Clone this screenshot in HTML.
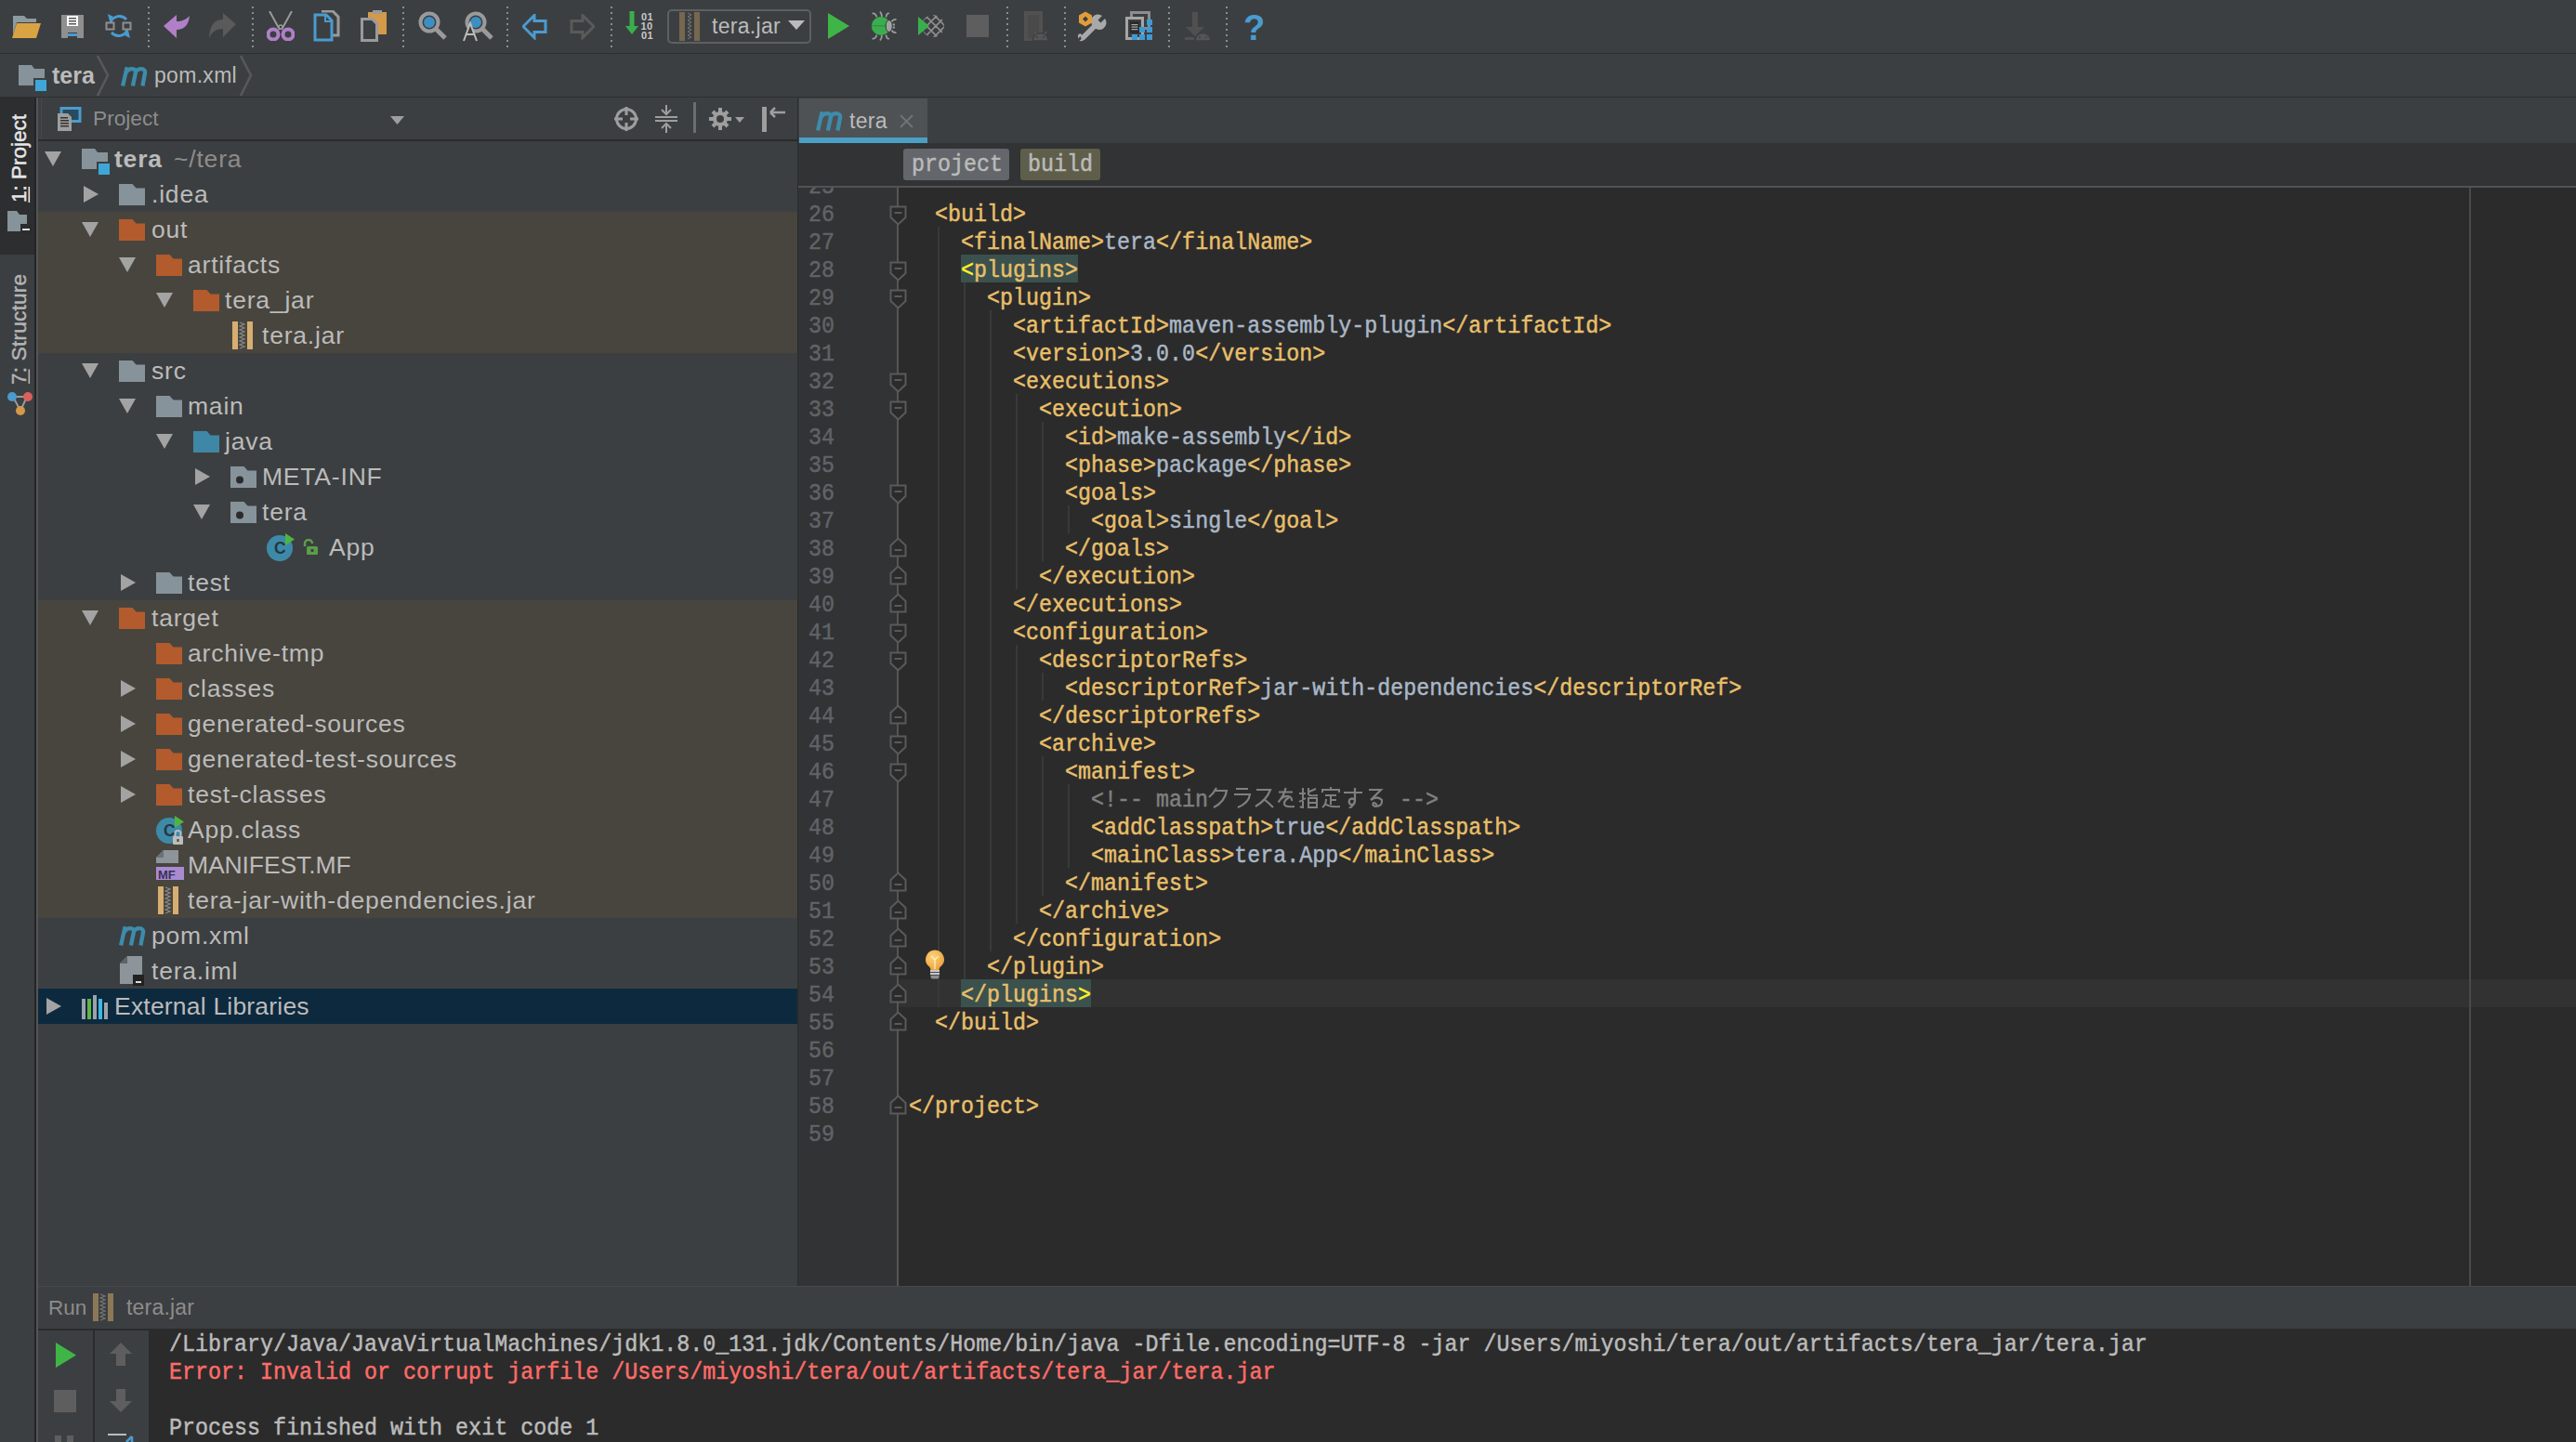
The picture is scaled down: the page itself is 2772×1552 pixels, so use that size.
<!DOCTYPE html><html><head><meta charset="utf-8"><style>
html,body{margin:0;padding:0;}
body{width:2772px;height:1552px;overflow:hidden;position:relative;background:#3c3f41;font-family:"Liberation Sans",sans-serif;}
div,svg{box-sizing:border-box;}
.cl{position:absolute;left:0;white-space:pre;font:26.3px/30px "Liberation Mono",monospace;transform:scaleX(0.8875);transform-origin:0 0;-webkit-text-stroke:0.5px currentColor;}
.t{color:#e8bf6a}.v{color:#a9b7c6}.c{color:#808080}
</style></head><body>
<div style="position:absolute;left:0px;top:0px;width:2772px;height:57px;background:#3c3f41;"></div>
<div style="position:absolute;left:0px;top:57px;width:2772px;height:1px;background:#2d2f30;"></div>
<svg style="position:absolute;left:159px;top:0px" width="2" height="58" viewBox="0 0 2 58"><rect x="0" y="7" width="2" height="2" fill="#8a8c8e"/><rect x="0" y="13" width="2" height="2" fill="#8a8c8e"/><rect x="0" y="19" width="2" height="2" fill="#8a8c8e"/><rect x="0" y="25" width="2" height="2" fill="#8a8c8e"/><rect x="0" y="31" width="2" height="2" fill="#8a8c8e"/><rect x="0" y="37" width="2" height="2" fill="#8a8c8e"/><rect x="0" y="43" width="2" height="2" fill="#8a8c8e"/><rect x="0" y="49" width="2" height="2" fill="#8a8c8e"/></svg>
<svg style="position:absolute;left:271px;top:0px" width="2" height="58" viewBox="0 0 2 58"><rect x="0" y="7" width="2" height="2" fill="#8a8c8e"/><rect x="0" y="13" width="2" height="2" fill="#8a8c8e"/><rect x="0" y="19" width="2" height="2" fill="#8a8c8e"/><rect x="0" y="25" width="2" height="2" fill="#8a8c8e"/><rect x="0" y="31" width="2" height="2" fill="#8a8c8e"/><rect x="0" y="37" width="2" height="2" fill="#8a8c8e"/><rect x="0" y="43" width="2" height="2" fill="#8a8c8e"/><rect x="0" y="49" width="2" height="2" fill="#8a8c8e"/></svg>
<svg style="position:absolute;left:433px;top:0px" width="2" height="58" viewBox="0 0 2 58"><rect x="0" y="7" width="2" height="2" fill="#8a8c8e"/><rect x="0" y="13" width="2" height="2" fill="#8a8c8e"/><rect x="0" y="19" width="2" height="2" fill="#8a8c8e"/><rect x="0" y="25" width="2" height="2" fill="#8a8c8e"/><rect x="0" y="31" width="2" height="2" fill="#8a8c8e"/><rect x="0" y="37" width="2" height="2" fill="#8a8c8e"/><rect x="0" y="43" width="2" height="2" fill="#8a8c8e"/><rect x="0" y="49" width="2" height="2" fill="#8a8c8e"/></svg>
<svg style="position:absolute;left:545px;top:0px" width="2" height="58" viewBox="0 0 2 58"><rect x="0" y="7" width="2" height="2" fill="#8a8c8e"/><rect x="0" y="13" width="2" height="2" fill="#8a8c8e"/><rect x="0" y="19" width="2" height="2" fill="#8a8c8e"/><rect x="0" y="25" width="2" height="2" fill="#8a8c8e"/><rect x="0" y="31" width="2" height="2" fill="#8a8c8e"/><rect x="0" y="37" width="2" height="2" fill="#8a8c8e"/><rect x="0" y="43" width="2" height="2" fill="#8a8c8e"/><rect x="0" y="49" width="2" height="2" fill="#8a8c8e"/></svg>
<svg style="position:absolute;left:657px;top:0px" width="2" height="58" viewBox="0 0 2 58"><rect x="0" y="7" width="2" height="2" fill="#8a8c8e"/><rect x="0" y="13" width="2" height="2" fill="#8a8c8e"/><rect x="0" y="19" width="2" height="2" fill="#8a8c8e"/><rect x="0" y="25" width="2" height="2" fill="#8a8c8e"/><rect x="0" y="31" width="2" height="2" fill="#8a8c8e"/><rect x="0" y="37" width="2" height="2" fill="#8a8c8e"/><rect x="0" y="43" width="2" height="2" fill="#8a8c8e"/><rect x="0" y="49" width="2" height="2" fill="#8a8c8e"/></svg>
<svg style="position:absolute;left:1083px;top:0px" width="2" height="58" viewBox="0 0 2 58"><rect x="0" y="7" width="2" height="2" fill="#8a8c8e"/><rect x="0" y="13" width="2" height="2" fill="#8a8c8e"/><rect x="0" y="19" width="2" height="2" fill="#8a8c8e"/><rect x="0" y="25" width="2" height="2" fill="#8a8c8e"/><rect x="0" y="31" width="2" height="2" fill="#8a8c8e"/><rect x="0" y="37" width="2" height="2" fill="#8a8c8e"/><rect x="0" y="43" width="2" height="2" fill="#8a8c8e"/><rect x="0" y="49" width="2" height="2" fill="#8a8c8e"/></svg>
<svg style="position:absolute;left:1145px;top:0px" width="2" height="58" viewBox="0 0 2 58"><rect x="0" y="7" width="2" height="2" fill="#8a8c8e"/><rect x="0" y="13" width="2" height="2" fill="#8a8c8e"/><rect x="0" y="19" width="2" height="2" fill="#8a8c8e"/><rect x="0" y="25" width="2" height="2" fill="#8a8c8e"/><rect x="0" y="31" width="2" height="2" fill="#8a8c8e"/><rect x="0" y="37" width="2" height="2" fill="#8a8c8e"/><rect x="0" y="43" width="2" height="2" fill="#8a8c8e"/><rect x="0" y="49" width="2" height="2" fill="#8a8c8e"/></svg>
<svg style="position:absolute;left:1257px;top:0px" width="2" height="58" viewBox="0 0 2 58"><rect x="0" y="7" width="2" height="2" fill="#8a8c8e"/><rect x="0" y="13" width="2" height="2" fill="#8a8c8e"/><rect x="0" y="19" width="2" height="2" fill="#8a8c8e"/><rect x="0" y="25" width="2" height="2" fill="#8a8c8e"/><rect x="0" y="31" width="2" height="2" fill="#8a8c8e"/><rect x="0" y="37" width="2" height="2" fill="#8a8c8e"/><rect x="0" y="43" width="2" height="2" fill="#8a8c8e"/><rect x="0" y="49" width="2" height="2" fill="#8a8c8e"/></svg>
<svg style="position:absolute;left:1319px;top:0px" width="2" height="58" viewBox="0 0 2 58"><rect x="0" y="7" width="2" height="2" fill="#8a8c8e"/><rect x="0" y="13" width="2" height="2" fill="#8a8c8e"/><rect x="0" y="19" width="2" height="2" fill="#8a8c8e"/><rect x="0" y="25" width="2" height="2" fill="#8a8c8e"/><rect x="0" y="31" width="2" height="2" fill="#8a8c8e"/><rect x="0" y="37" width="2" height="2" fill="#8a8c8e"/><rect x="0" y="43" width="2" height="2" fill="#8a8c8e"/><rect x="0" y="49" width="2" height="2" fill="#8a8c8e"/></svg>
<svg style="position:absolute;left:13px;top:16px" width="32" height="26" viewBox="0 0 32 26"><path d="M1 1h12l3 3h10v4H5L1 22z" fill="#8d9aa1"/><path d="M5 9h26l-5 16H0z" fill="#d9a343"/></svg>
<svg style="position:absolute;left:66px;top:16px" width="24" height="25" viewBox="0 0 24 25"><path d="M0 0h24v25H0z" fill="#8f8f8f"/><rect x="6" y="1" width="12" height="11" fill="#fff"/><rect x="8" y="3" width="8" height="1.5" fill="#555"/><rect x="8" y="6" width="8" height="1.5" fill="#555"/><rect x="8" y="9" width="8" height="1.5" fill="#555"/><rect x="7" y="19" width="10" height="6" fill="#3c3f41"/><rect x="7" y="20" width="10" height="3" fill="#4a9bd0"/></svg>
<svg style="position:absolute;left:113px;top:13px" width="30" height="30" viewBox="0 0 30 30"><path d="M6 11 A10 10 0 0 1 23 8" stroke="#4a9bd0" stroke-width="3" fill="none"/><path d="M24 19 A10 10 0 0 1 7 22" stroke="#4a9bd0" stroke-width="3" fill="none"/><path d="M3 2l6 3-4 5z" fill="#4a9bd0"/><path d="M27 28l-6-3 4-5z" fill="#4a9bd0"/><rect x="1.5" y="11.5" width="8" height="7" stroke="#8f8f8f" stroke-width="2" fill="none"/><rect x="19.5" y="11.5" width="8" height="7" stroke="#8f8f8f" stroke-width="2" fill="none"/></svg>
<svg style="position:absolute;left:176px;top:15px" width="29" height="28" viewBox="0 0 29 28"><path d="M0 13L14 1v7c6 0 10-2 14-6-1 10-6 15-14 15v9z" fill="#b17fc8"/></svg>
<svg style="position:absolute;left:225px;top:14px" width="29" height="28" viewBox="0 0 29 28"><path d="M29 12L15 0v7C7 7 1 11 0 27c3-7 8-10 15-10v9z" fill="#5a5a5a"/></svg>
<svg style="position:absolute;left:287px;top:12px" width="30" height="32" viewBox="0 0 30 32"><path d="M3 0l11 20M27 0L16 20" stroke="#9a9a9a" stroke-width="2" fill="none"/><circle cx="15" cy="17" r="2" fill="#3c3f41" stroke="#9a9a9a" stroke-width="1.5"/><circle cx="7" cy="25" r="5.5" fill="none" stroke="#b17fc8" stroke-width="4"/><circle cx="23" cy="25" r="5.5" fill="none" stroke="#b17fc8" stroke-width="4"/></svg>
<svg style="position:absolute;left:337px;top:11px" width="30" height="34" viewBox="0 0 30 34"><path d="M9 1h12l6 6v20H19" stroke="#9a9a9a" stroke-width="3" fill="none"/><path d="M2 5h12l6 6v21H2z" stroke="#4a9bd0" stroke-width="3" fill="#3c3f41"/><path d="M13 5v7h7" stroke="#4a9bd0" stroke-width="2" fill="none"/></svg>
<svg style="position:absolute;left:388px;top:11px" width="30" height="34" viewBox="0 0 30 34"><rect x="8" y="2" width="20" height="24" fill="#d39a4a"/><rect x="13" y="0" width="10" height="4" fill="#9a9a9a"/><path d="M1.5 9.5h11l5 5v18h-16z" stroke="#9a9a9a" stroke-width="3" fill="#3c3f41"/></svg>
<svg style="position:absolute;left:450px;top:12px" width="31" height="31" viewBox="0 0 31 31"><circle cx="12" cy="12" r="9.5" stroke="#9a9a9a" stroke-width="4" fill="none"/><circle cx="12" cy="12" r="6" fill="#3d8ec2"/><path d="M19 19l10 10" stroke="#9a9a9a" stroke-width="5"/></svg>
<svg style="position:absolute;left:498px;top:12px" width="33" height="33" viewBox="0 0 33 33"><circle cx="14" cy="12" r="9.5" stroke="#9a9a9a" stroke-width="4" fill="none"/><circle cx="14" cy="12" r="6" fill="#3d8ec2"/><path d="M21 19l10 10" stroke="#9a9a9a" stroke-width="5"/><path d="M1 32L8 13l7 19M4 25h8" stroke="#bbbbbb" stroke-width="2" fill="#3c3f41"/></svg>
<svg style="position:absolute;left:562px;top:15px" width="27" height="28" viewBox="0 0 27 28"><path d="M1 13.5L13 1.5v6h12v12H13v6z" stroke="#4a9bd0" stroke-width="3" fill="none"/></svg>
<svg style="position:absolute;left:613px;top:15px" width="27" height="28" viewBox="0 0 27 28"><path d="M26 13.5L14 1.5v6H2v12h12v6z" stroke="#5a5a5a" stroke-width="3" fill="none"/></svg>
<svg style="position:absolute;left:673px;top:12px" width="34" height="34" viewBox="0 0 34 34"><path d="M7 0v19" stroke="#3aae4e" stroke-width="5"/><path d="M0 16h14l-7 9z" fill="#3aae4e"/><text x="17" y="9.5" font-family="Liberation Sans" font-size="11" fill="#c8c8c8" font-weight="bold" letter-spacing="0.5">01</text><text x="16.5" y="19.5" font-family="Liberation Sans" font-size="11" fill="#c8c8c8" font-weight="bold" letter-spacing="0.5">10</text><text x="17" y="29.5" font-family="Liberation Sans" font-size="11" fill="#c8c8c8" font-weight="bold" letter-spacing="0.5">01</text></svg>
<div style="position:absolute;left:718px;top:10px;width:155px;height:37px;border:2px solid #5e6060;border-radius:5px;background:#3c3f41"></div>
<svg style="position:absolute;left:731px;top:12px" width="23" height="33" viewBox="0 0 23 33"><rect x="0" y="1" width="6" height="31" fill="#76674f"/><rect x="16" y="1" width="6" height="31" fill="#76674f"/><path d="M9 2l4 2-4 2 4 2-4 2 4 2-4 2 4 2-4 2 4 2-4 2 4 2-4 2 4 2-4 2" stroke="#777" stroke-width="1" fill="none"/></svg>
<div style="position:absolute;left:766px;top:17.03px;font:normal 23px/23px 'Liberation Sans', sans-serif;color:#bbbbbb;letter-spacing:0.3px;white-space:pre;">tera.jar</div>
<svg style="position:absolute;left:848px;top:22px" width="18" height="11" viewBox="0 0 18 11"><path d="M0 0h18L9 10z" fill="#bbbbbb"/></svg>
<svg style="position:absolute;left:891px;top:14px" width="23" height="28" viewBox="0 0 23 28"><path d="M0 0l23 14L0 28z" fill="#3fb547"/></svg>
<svg style="position:absolute;left:937px;top:12px" width="33" height="32" viewBox="0 0 33 32"><g stroke="#9a9a9a" stroke-width="1.8" fill="none"><path d="M1.5 2.5Q5 1.5 6.5 6.5M10 0.5Q12 3 12 6M20 2.5Q17 1.5 16.5 6.5M1.5 29.5Q5 30.5 6.5 25.5M10 31.5Q12 29 12 26M20 29.5Q17 30.5 16.5 25.5M22 12Q24 8.5 27.5 9M22 20Q24 23.5 27.5 23M23 14.5h3M23 17.5h3"/></g><ellipse cx="11" cy="16" rx="10.2" ry="10" fill="#3aae4e"/><path d="M1 15h16v1.5H1z" fill="#2f9643"/><ellipse cx="19.7" cy="16" rx="3.6" ry="6.4" fill="#a3a3a3" stroke="#2f3a33" stroke-width="1"/></svg>
<svg style="position:absolute;left:987px;top:13px" width="30" height="30" viewBox="0 0 30 30"><defs><clipPath id="cvc"><circle cx="17" cy="15" r="12"/></clipPath></defs><g clip-path="url(#cvc)" stroke="#8f8f8f" stroke-width="1.6"><path d="M-10 5L20 35M-5 0L25 30M0 -5L30 25M5 -10L35 20M10 -15L40 15M-10 25L20 -5M-5 30L25 0M0 35L30 5M5 40L35 10M10 45L40 15"/></g><path d="M1 5l12 10L1 25z" fill="#3aae4e"/></svg>
<div style="position:absolute;left:1040px;top:16px;width:24px;height:24px;background:#5e5e5e;"></div>
<svg style="position:absolute;left:1101px;top:12px" width="28" height="32" viewBox="0 0 28 32"><rect x="3" y="2" width="16" height="29" stroke="#515151" stroke-width="4" fill="#4a4a4a"/><path d="M10 32a8.5 8.5 0 0 1 17 0z" fill="#555" stroke="#3c3f41" stroke-width="1.5"/><path d="M12 22l2 3M25 22l-2 3" stroke="#555" stroke-width="1.5"/><circle cx="15" cy="28" r="1" fill="#3c3f41"/><circle cx="22" cy="28" r="1" fill="#3c3f41"/></svg>
<svg style="position:absolute;left:1160px;top:12px" width="33" height="33" viewBox="0 0 33 33"><path d="M6 28L19 15" stroke="#a9a9a9" stroke-width="5.5" stroke-linecap="round"/><path d="M17 17a7.5 7.5 0 0 1 9-12l-4.5 4.5 3 3L29 8a7.5 7.5 0 0 1-12 9z" fill="#a9a9a9"/><path d="M7.5 29a5 5 0 0 1-6 3l3-3-2-2-3 3a5 5 0 0 1 3-6z" fill="#a9a9a9"/><path d="M8 0.5l7 4v8l-7 4-7-4v-8z" fill="#e19d3b"/><path d="M8 5.5l3 3-3 3-3-3z" fill="#3c3f41"/></svg>
<svg style="position:absolute;left:1211px;top:12px" width="30" height="32" viewBox="0 0 30 32"><rect x="6.5" y="1.5" width="19" height="17" stroke="#8d8d8d" stroke-width="3" fill="none"/><rect x="1.5" y="7.5" width="17" height="22" stroke="#a5a5a5" stroke-width="3" fill="#3c3f41"/><rect x="5" y="11" width="10" height="13" fill="#2b2b2b"/><g fill="#aaa"><rect x="6.5" y="14" width="7" height="1.2"/><rect x="6.5" y="16.5" width="7" height="1.2"/><rect x="6.5" y="19" width="7" height="1.2"/></g><g fill="#3d9ad6"><rect x="23" y="9" width="6" height="6"/><rect x="15" y="17" width="6" height="6"/><rect x="23" y="17" width="6" height="6"/><rect x="7" y="25" width="6" height="6"/><rect x="15" y="25" width="6" height="6"/><rect x="23" y="25" width="6" height="6"/></g></svg>
<svg style="position:absolute;left:1275px;top:12px" width="28" height="32" viewBox="0 0 28 32"><path d="M11 1v18" stroke="#505050" stroke-width="6"/><path d="M1 17h20L11 27z" fill="#505050"/><rect x="0" y="28" width="10" height="3" fill="#505050"/><path d="M11 32a8.5 8.5 0 0 1 17 0z" fill="#555" stroke="#3c3f41" stroke-width="1.5"/><circle cx="16" cy="28" r="1" fill="#3c3f41"/><circle cx="23" cy="28" r="1" fill="#3c3f41"/></svg>
<div style="position:absolute;left:1338px;top:10.83px;font:bold 38px/38px 'Liberation Sans', sans-serif;color:#4a9bd0;letter-spacing:0px;white-space:pre;">?</div>
<div style="position:absolute;left:0px;top:58px;width:2772px;height:46px;background:#3c3f41;"></div>
<div style="position:absolute;left:0px;top:104px;width:2772px;height:1px;background:#2d2f30;"></div>
<svg style="position:absolute;left:20px;top:70px" width="32" height="29" viewBox="0 0 32 29"><path d="M0 0h14l3 4h11v18H0z" fill="#87939a"/><rect x="16" y="14" width="15" height="14" fill="#3c3f41"/><rect x="18" y="16" width="12" height="12" fill="#3ea6d8"/></svg>
<div style="position:absolute;left:56px;top:68.54px;font:bold 25px/25px 'Liberation Sans', sans-serif;color:#bbbbbb;letter-spacing:0px;white-space:pre;">tera</div>
<svg style="position:absolute;left:103px;top:59px" width="16" height="45" viewBox="0 0 16 45"><path d="M2 1l11 21L2 44" stroke="#56585a" stroke-width="2.6" fill="none"/></svg>
<svg style="position:absolute;left:130px;top:72px" width="30" height="22" viewBox="0 0 30 22"><path d="M2.1 20.5 L6.7 0.2 M5.6 6.5 C7.4 3.2 9.6 2.2 12.2 2.2 C15.2 2.2 16.4 3.9 15.8 6.8 L12.9 20.5 M15.3 6.5 C17.1 3.2 19.3 2.2 21.9 2.2 C24.9 2.2 26.6 3.9 26 6.8 L23.4 20.5" stroke="#3d8cab" stroke-width="4.3" fill="none"/></svg>
<div style="position:absolute;left:166px;top:70.23px;font:normal 23px/23px 'Liberation Sans', sans-serif;color:#bbbbbb;letter-spacing:0.3px;white-space:pre;">pom.xml</div>
<svg style="position:absolute;left:257px;top:59px" width="16" height="45" viewBox="0 0 16 45"><path d="M2 1l11 21L2 44" stroke="#56585a" stroke-width="2.6" fill="none"/></svg>
<div style="position:absolute;left:0px;top:105px;width:39px;height:1447px;background:#3c3f41;"></div>
<div style="position:absolute;left:0px;top:105px;width:37px;height:169px;background:#2d2e30;"></div>
<div style="position:absolute;left:37px;top:105px;width:2px;height:1447px;background:#232425;"></div>
<div style="position:absolute;left:39px;top:105px;width:2px;height:1447px;background:#535557;"></div>
<svg style="position:absolute;left:0px;top:105px" width="39" height="168" viewBox="0 0 39 168"><text transform="translate(27.5,113) rotate(-90)" font-family="Liberation Sans" font-size="22.5" fill="#e6e6e6" stroke="#e6e6e6" stroke-width="0.45">1: Project</text><rect x="30.5" y="96" width="1.6" height="17" fill="#e6e6e6"/></svg>
<svg style="position:absolute;left:8px;top:227px" width="27" height="24" viewBox="0 0 27 24"><path d="M0 0h10l3 4h8v18H0z" fill="#87939a"/><rect x="14" y="14" width="13" height="10" fill="#2b2c2e"/><rect x="16" y="19" width="8" height="2" fill="#ddd"/></svg>
<svg style="position:absolute;left:0px;top:280px" width="39" height="140" viewBox="0 0 39 140"><text transform="translate(27.5,134) rotate(-90)" font-family="Liberation Sans" font-size="22.5" fill="#b4b4b4" stroke="#b4b4b4" stroke-width="0.45" letter-spacing="0.25">7: Structure</text><rect x="30.5" y="117.5" width="1.6" height="15.5" fill="#b4b4b4"/></svg>
<svg style="position:absolute;left:8px;top:421px" width="27" height="27" viewBox="0 0 27 27"><path d="M6 6L14 21M21 6L14 21M6 6h15" stroke="#999" stroke-width="2"/><circle cx="5" cy="6" r="5" fill="#4a9bd0"/><circle cx="22" cy="6" r="5" fill="#d9605c"/><circle cx="14" cy="21" r="5" fill="#d39a4a"/></svg>
<div style="position:absolute;left:41px;top:105px;width:817px;height:45px;background:#3c3f41;"></div>
<div style="position:absolute;left:44px;top:105px;width:1px;height:45px;background:#45484a;"></div>
<div style="position:absolute;left:41px;top:150px;width:817px;height:2px;background:#2a2b2c;"></div>
<svg style="position:absolute;left:62px;top:115px" width="30" height="26" viewBox="0 0 30 26"><rect x="4" y="1.5" width="20" height="14" stroke="#4a9bd0" stroke-width="3" fill="#2a4a5e"/><path d="M0 7h11l4 4v15H0z" fill="#9e9e9e"/><g fill="#333"><rect x="3" y="11" width="8" height="1.5"/><rect x="3" y="14" width="9" height="1.5"/><rect x="3" y="17" width="9" height="1.5"/><rect x="3" y="20" width="9" height="1.5"/></g></svg>
<div style="position:absolute;left:100px;top:116.48px;font:normal 22.7px/22.7px 'Liberation Sans', sans-serif;color:#8c8c8c;letter-spacing:0px;white-space:pre;">Project</div>
<svg style="position:absolute;left:420px;top:125px" width="15" height="9" viewBox="0 0 15 9"><path d="M0 0h15L7.5 9z" fill="#9e9e9e"/></svg>
<svg style="position:absolute;left:661px;top:115px" width="26" height="26" viewBox="0 0 26 26"><circle cx="13" cy="13" r="10.5" stroke="#9e9e9e" stroke-width="3" fill="none"/><path d="M13 0v9M13 17v9M0 13h9M17 13h9" stroke="#9e9e9e" stroke-width="3"/></svg>
<svg style="position:absolute;left:705px;top:113px" width="24" height="30" viewBox="0 0 24 30"><path d="M0 13h24M0 17h24" stroke="#9e9e9e" stroke-width="2"/><path d="M12 0v9M7 5l5 5 5-5M12 30v-9M7 25l5-5 5 5" stroke="#9e9e9e" stroke-width="2" fill="none"/></svg>
<div style="position:absolute;left:746px;top:110px;width:3px;height:33px;background:#6b6e70;"></div>
<svg style="position:absolute;left:763px;top:115px" width="40" height="26" viewBox="0 0 40 26"><circle cx="12" cy="13" r="8" fill="#9e9e9e"/><g stroke="#9e9e9e" stroke-width="4"><path d="M12 1v24M0 13h24M4 5l16 16M20 5L4 21"/></g><circle cx="12" cy="13" r="4" fill="#3c3f41"/><path d="M28 11h10l-5 6z" fill="#9e9e9e"/></svg>
<svg style="position:absolute;left:819px;top:114px" width="27" height="28" viewBox="0 0 27 28"><rect x="1" y="1" width="5" height="27" fill="#9e9e9e"/><path d="M10 7h16M10 7l5-5M10 7l5 5" stroke="#9e9e9e" stroke-width="2.5" fill="none"/></svg>
<div style="position:absolute;left:41px;top:228px;width:817px;height:38px;background:#48453e;"></div>
<div style="position:absolute;left:41px;top:266px;width:817px;height:38px;background:#48453e;"></div>
<div style="position:absolute;left:41px;top:304px;width:817px;height:38px;background:#48453e;"></div>
<div style="position:absolute;left:41px;top:342px;width:817px;height:38px;background:#48453e;"></div>
<div style="position:absolute;left:41px;top:646px;width:817px;height:38px;background:#48453e;"></div>
<div style="position:absolute;left:41px;top:684px;width:817px;height:38px;background:#48453e;"></div>
<div style="position:absolute;left:41px;top:722px;width:817px;height:38px;background:#48453e;"></div>
<div style="position:absolute;left:41px;top:760px;width:817px;height:38px;background:#48453e;"></div>
<div style="position:absolute;left:41px;top:798px;width:817px;height:38px;background:#48453e;"></div>
<div style="position:absolute;left:41px;top:836px;width:817px;height:38px;background:#48453e;"></div>
<div style="position:absolute;left:41px;top:874px;width:817px;height:38px;background:#48453e;"></div>
<div style="position:absolute;left:41px;top:912px;width:817px;height:38px;background:#48453e;"></div>
<div style="position:absolute;left:41px;top:950px;width:817px;height:38px;background:#48453e;"></div>
<div style="position:absolute;left:41px;top:1064px;width:817px;height:38px;background:#0d293e;"></div>
<svg style="position:absolute;left:48px;top:163px" width="18" height="16" viewBox="0 0 18 16"><path d="M0 0h18L9 16z" fill="#a3a3a3"/></svg>
<svg style="position:absolute;left:88px;top:160px" width="32" height="29" viewBox="0 0 32 29"><path d="M0 0h14l3 4h11v18H0z" fill="#87939a"/><rect x="16" y="14" width="15" height="14" fill="#3c3f41"/><rect x="18" y="16" width="12" height="12" fill="#3ea6d8"/></svg>
<div style="position:absolute;left:123px;top:158.07px;font:normal 26.5px/26.5px 'Liberation Sans', sans-serif;color:#bbbbbb;letter-spacing:0.8px;white-space:pre;"><b>tera</b></div>
<div style="position:absolute;left:187px;top:158.07px;font:normal 26.5px/26.5px 'Liberation Sans', sans-serif;color:#8c8c8c;letter-spacing:0.8px;white-space:pre;">~/tera</div>
<svg style="position:absolute;left:90px;top:200px" width="16" height="18" viewBox="0 0 16 18"><path d="M0 0v18L16 9z" fill="#a3a3a3"/></svg>
<svg style="position:absolute;left:128px;top:198px" width="28" height="23" viewBox="0 0 28 23"><path d="M0 0h14.5l4 4.5H28V23H0z" fill="#87939a"/></svg>
<div style="position:absolute;left:163px;top:196.07px;font:normal 26.5px/26.5px 'Liberation Sans', sans-serif;color:#bbbbbb;letter-spacing:0.8px;white-space:pre;">.idea</div>
<svg style="position:absolute;left:88px;top:239px" width="18" height="16" viewBox="0 0 18 16"><path d="M0 0h18L9 16z" fill="#a3a3a3"/></svg>
<svg style="position:absolute;left:128px;top:236px" width="28" height="23" viewBox="0 0 28 23"><path d="M0 0h14.5l4 4.5H28V23H0z" fill="#b35b2c"/></svg>
<div style="position:absolute;left:163px;top:234.07px;font:normal 26.5px/26.5px 'Liberation Sans', sans-serif;color:#bbbbbb;letter-spacing:0.8px;white-space:pre;">out</div>
<svg style="position:absolute;left:128px;top:277px" width="18" height="16" viewBox="0 0 18 16"><path d="M0 0h18L9 16z" fill="#a3a3a3"/></svg>
<svg style="position:absolute;left:168px;top:274px" width="28" height="23" viewBox="0 0 28 23"><path d="M0 0h14.5l4 4.5H28V23H0z" fill="#b35b2c"/></svg>
<div style="position:absolute;left:202px;top:272.07px;font:normal 26.5px/26.5px 'Liberation Sans', sans-serif;color:#bbbbbb;letter-spacing:0.8px;white-space:pre;">artifacts</div>
<svg style="position:absolute;left:168px;top:315px" width="18" height="16" viewBox="0 0 18 16"><path d="M0 0h18L9 16z" fill="#a3a3a3"/></svg>
<svg style="position:absolute;left:208px;top:312px" width="28" height="23" viewBox="0 0 28 23"><path d="M0 0h14.5l4 4.5H28V23H0z" fill="#b35b2c"/></svg>
<div style="position:absolute;left:242px;top:310.07px;font:normal 26.5px/26.5px 'Liberation Sans', sans-serif;color:#bbbbbb;letter-spacing:0.8px;white-space:pre;">tera_jar</div>
<svg style="position:absolute;left:250px;top:346px" width="23" height="30" viewBox="0 0 23 30"><rect x="0" y="0" width="6" height="30" fill="#d7ae72"/><rect x="16" y="0" width="6" height="30" fill="#d7ae72"/><path d="M8 1l5 2-5 2 5 2-5 2 5 2-5 2 5 2-5 2 5 2-5 2 5 2-5 2 5 2-5 2" stroke="#8a8a8a" stroke-width="1.2" fill="none"/></svg>
<div style="position:absolute;left:282px;top:348.07px;font:normal 26.5px/26.5px 'Liberation Sans', sans-serif;color:#bbbbbb;letter-spacing:0.8px;white-space:pre;">tera.jar</div>
<svg style="position:absolute;left:88px;top:391px" width="18" height="16" viewBox="0 0 18 16"><path d="M0 0h18L9 16z" fill="#a3a3a3"/></svg>
<svg style="position:absolute;left:128px;top:388px" width="28" height="23" viewBox="0 0 28 23"><path d="M0 0h14.5l4 4.5H28V23H0z" fill="#87939a"/></svg>
<div style="position:absolute;left:163px;top:386.07px;font:normal 26.5px/26.5px 'Liberation Sans', sans-serif;color:#bbbbbb;letter-spacing:0.8px;white-space:pre;">src</div>
<svg style="position:absolute;left:128px;top:429px" width="18" height="16" viewBox="0 0 18 16"><path d="M0 0h18L9 16z" fill="#a3a3a3"/></svg>
<svg style="position:absolute;left:168px;top:426px" width="28" height="23" viewBox="0 0 28 23"><path d="M0 0h14.5l4 4.5H28V23H0z" fill="#87939a"/></svg>
<div style="position:absolute;left:202px;top:424.07px;font:normal 26.5px/26.5px 'Liberation Sans', sans-serif;color:#bbbbbb;letter-spacing:0.8px;white-space:pre;">main</div>
<svg style="position:absolute;left:168px;top:467px" width="18" height="16" viewBox="0 0 18 16"><path d="M0 0h18L9 16z" fill="#a3a3a3"/></svg>
<svg style="position:absolute;left:208px;top:464px" width="28" height="23" viewBox="0 0 28 23"><path d="M0 0h14.5l4 4.5H28V23H0z" fill="#3f87a6"/></svg>
<div style="position:absolute;left:242px;top:462.07px;font:normal 26.5px/26.5px 'Liberation Sans', sans-serif;color:#bbbbbb;letter-spacing:0.8px;white-space:pre;">java</div>
<svg style="position:absolute;left:210px;top:504px" width="16" height="18" viewBox="0 0 16 18"><path d="M0 0v18L16 9z" fill="#a3a3a3"/></svg>
<svg style="position:absolute;left:248px;top:502px" width="28" height="23" viewBox="0 0 28 23"><path d="M0 0h14.5l4 4.5H28V23H0z" fill="#87939a"/><circle cx="10" cy="14.5" r="4" fill="#2b2b2b"/></svg>
<div style="position:absolute;left:282px;top:500.07px;font:normal 26.5px/26.5px 'Liberation Sans', sans-serif;color:#bbbbbb;letter-spacing:0.8px;white-space:pre;">META-INF</div>
<svg style="position:absolute;left:208px;top:543px" width="18" height="16" viewBox="0 0 18 16"><path d="M0 0h18L9 16z" fill="#a3a3a3"/></svg>
<svg style="position:absolute;left:248px;top:540px" width="28" height="23" viewBox="0 0 28 23"><path d="M0 0h14.5l4 4.5H28V23H0z" fill="#87939a"/><circle cx="10" cy="14.5" r="4" fill="#2b2b2b"/></svg>
<div style="position:absolute;left:282px;top:538.07px;font:normal 26.5px/26.5px 'Liberation Sans', sans-serif;color:#bbbbbb;letter-spacing:0.8px;white-space:pre;">tera</div>
<svg style="position:absolute;left:287px;top:574px" width="31" height="32" viewBox="0 0 31 32"><circle cx="14" cy="16" r="14" fill="#3d8aa8"/><text x="14.3" y="22.2" text-anchor="middle" font-family="Liberation Sans" font-weight="bold" font-size="17.5" fill="#263640">C</text><path d="M20 0v13l10-6.5z" fill="#4fb541"/></svg>
<svg style="position:absolute;left:325px;top:580px" width="18" height="18" viewBox="0 0 18 18"><path d="M3 8V5a4 4 0 0 1 8 0" stroke="#5a9e48" stroke-width="2.5" fill="none"/><rect x="5" y="8" width="12" height="9" rx="1.5" fill="#5a9e48"/><rect x="9.5" y="11" width="3" height="3" fill="#3c3f41"/></svg>
<div style="position:absolute;left:354px;top:576.07px;font:normal 26.5px/26.5px 'Liberation Sans', sans-serif;color:#bbbbbb;letter-spacing:0.8px;white-space:pre;">App</div>
<svg style="position:absolute;left:130px;top:618px" width="16" height="18" viewBox="0 0 16 18"><path d="M0 0v18L16 9z" fill="#a3a3a3"/></svg>
<svg style="position:absolute;left:168px;top:616px" width="28" height="23" viewBox="0 0 28 23"><path d="M0 0h14.5l4 4.5H28V23H0z" fill="#87939a"/></svg>
<div style="position:absolute;left:202px;top:614.07px;font:normal 26.5px/26.5px 'Liberation Sans', sans-serif;color:#bbbbbb;letter-spacing:0.8px;white-space:pre;">test</div>
<svg style="position:absolute;left:88px;top:657px" width="18" height="16" viewBox="0 0 18 16"><path d="M0 0h18L9 16z" fill="#a3a3a3"/></svg>
<svg style="position:absolute;left:128px;top:654px" width="28" height="23" viewBox="0 0 28 23"><path d="M0 0h14.5l4 4.5H28V23H0z" fill="#b35b2c"/></svg>
<div style="position:absolute;left:163px;top:652.07px;font:normal 26.5px/26.5px 'Liberation Sans', sans-serif;color:#bbbbbb;letter-spacing:0.8px;white-space:pre;">target</div>
<svg style="position:absolute;left:168px;top:692px" width="28" height="23" viewBox="0 0 28 23"><path d="M0 0h14.5l4 4.5H28V23H0z" fill="#b35b2c"/></svg>
<div style="position:absolute;left:202px;top:690.07px;font:normal 26.5px/26.5px 'Liberation Sans', sans-serif;color:#bbbbbb;letter-spacing:0.8px;white-space:pre;">archive-tmp</div>
<svg style="position:absolute;left:130px;top:732px" width="16" height="18" viewBox="0 0 16 18"><path d="M0 0v18L16 9z" fill="#a3a3a3"/></svg>
<svg style="position:absolute;left:168px;top:730px" width="28" height="23" viewBox="0 0 28 23"><path d="M0 0h14.5l4 4.5H28V23H0z" fill="#b35b2c"/></svg>
<div style="position:absolute;left:202px;top:728.07px;font:normal 26.5px/26.5px 'Liberation Sans', sans-serif;color:#bbbbbb;letter-spacing:0.8px;white-space:pre;">classes</div>
<svg style="position:absolute;left:130px;top:770px" width="16" height="18" viewBox="0 0 16 18"><path d="M0 0v18L16 9z" fill="#a3a3a3"/></svg>
<svg style="position:absolute;left:168px;top:768px" width="28" height="23" viewBox="0 0 28 23"><path d="M0 0h14.5l4 4.5H28V23H0z" fill="#b35b2c"/></svg>
<div style="position:absolute;left:202px;top:766.07px;font:normal 26.5px/26.5px 'Liberation Sans', sans-serif;color:#bbbbbb;letter-spacing:0.8px;white-space:pre;">generated-sources</div>
<svg style="position:absolute;left:130px;top:808px" width="16" height="18" viewBox="0 0 16 18"><path d="M0 0v18L16 9z" fill="#a3a3a3"/></svg>
<svg style="position:absolute;left:168px;top:806px" width="28" height="23" viewBox="0 0 28 23"><path d="M0 0h14.5l4 4.5H28V23H0z" fill="#b35b2c"/></svg>
<div style="position:absolute;left:202px;top:804.07px;font:normal 26.5px/26.5px 'Liberation Sans', sans-serif;color:#bbbbbb;letter-spacing:0.8px;white-space:pre;">generated-test-sources</div>
<svg style="position:absolute;left:130px;top:846px" width="16" height="18" viewBox="0 0 16 18"><path d="M0 0v18L16 9z" fill="#a3a3a3"/></svg>
<svg style="position:absolute;left:168px;top:844px" width="28" height="23" viewBox="0 0 28 23"><path d="M0 0h14.5l4 4.5H28V23H0z" fill="#b35b2c"/></svg>
<div style="position:absolute;left:202px;top:842.07px;font:normal 26.5px/26.5px 'Liberation Sans', sans-serif;color:#bbbbbb;letter-spacing:0.8px;white-space:pre;">test-classes</div>
<svg style="position:absolute;left:168px;top:878px" width="31" height="32" viewBox="0 0 31 32"><circle cx="14" cy="16" r="14" fill="#3d8aa8"/><text x="14.3" y="22.2" text-anchor="middle" font-family="Liberation Sans" font-weight="bold" font-size="17.5" fill="#263640">C</text><path d="M20 0v13l10-6.5z" fill="#4fb541"/><rect x="18" y="22" width="11" height="9" rx="1" fill="#bdbdbd"/><path d="M20.5 22v-3a3 3 0 0 1 6 0v3" stroke="#bdbdbd" stroke-width="2" fill="none"/><rect x="22.5" y="25" width="2" height="3" fill="#45423b"/></svg>
<div style="position:absolute;left:202px;top:880.07px;font:normal 26.5px/26.5px 'Liberation Sans', sans-serif;color:#bbbbbb;letter-spacing:0.8px;white-space:pre;">App.class</div>
<svg style="position:absolute;left:168px;top:915px" width="30" height="32" viewBox="0 0 30 32"><path d="M8 0h16v14H0V8z" fill="#8d959a"/><path d="M0 8h8V0z" fill="#6b7175"/><rect x="0" y="18" width="30" height="14" fill="#a88bd1"/><text x="2" y="30.5" font-family="Liberation Sans" font-weight="bold" font-size="13" fill="#3c2f55">MF</text></svg>
<div style="position:absolute;left:202px;top:918.07px;font:normal 26.5px/26.5px 'Liberation Sans', sans-serif;color:#bbbbbb;letter-spacing:-0.1px;white-space:pre;">MANIFEST.MF</div>
<svg style="position:absolute;left:170px;top:954px" width="23" height="30" viewBox="0 0 23 30"><rect x="0" y="0" width="6" height="30" fill="#d7ae72"/><rect x="16" y="0" width="6" height="30" fill="#d7ae72"/><path d="M8 1l5 2-5 2 5 2-5 2 5 2-5 2 5 2-5 2 5 2-5 2 5 2-5 2 5 2-5 2" stroke="#8a8a8a" stroke-width="1.2" fill="none"/></svg>
<div style="position:absolute;left:202px;top:956.07px;font:normal 26.5px/26.5px 'Liberation Sans', sans-serif;color:#bbbbbb;letter-spacing:0.8px;white-space:pre;">tera-jar-with-dependencies.jar</div>
<svg style="position:absolute;left:128px;top:997px" width="30" height="22" viewBox="0 0 30 22"><path d="M2.1 20.5 L6.7 0.2 M5.6 6.5 C7.4 3.2 9.6 2.2 12.2 2.2 C15.2 2.2 16.4 3.9 15.8 6.8 L12.9 20.5 M15.3 6.5 C17.1 3.2 19.3 2.2 21.9 2.2 C24.9 2.2 26.6 3.9 26 6.8 L23.4 20.5" stroke="#3d8cab" stroke-width="4.3" fill="none"/></svg>
<div style="position:absolute;left:163px;top:994.07px;font:normal 26.5px/26.5px 'Liberation Sans', sans-serif;color:#bbbbbb;letter-spacing:0.8px;white-space:pre;">pom.xml</div>
<svg style="position:absolute;left:129px;top:1029px" width="26" height="32" viewBox="0 0 26 32"><path d="M8 0h16v30H0V8z" fill="#8d959a"/><path d="M0 8h8V0z" fill="#5e6366"/><rect x="14" y="20" width="12" height="12" fill="#222"/><rect x="17" y="27" width="6" height="2" fill="#ddd"/></svg>
<div style="position:absolute;left:163px;top:1032.07px;font:normal 26.5px/26.5px 'Liberation Sans', sans-serif;color:#bbbbbb;letter-spacing:0.8px;white-space:pre;">tera.iml</div>
<svg style="position:absolute;left:50px;top:1074px" width="16" height="18" viewBox="0 0 16 18"><path d="M0 0v18L16 9z" fill="#a3a3a3"/></svg>
<svg style="position:absolute;left:88px;top:1070px" width="29" height="27" viewBox="0 0 29 27"><rect x="0" y="5" width="4" height="22" fill="#9ba3a9"/><rect x="6" y="5" width="4" height="22" fill="#62b543"/><rect x="12" y="1" width="4" height="26" fill="#9ba3a9"/><rect x="18" y="5" width="4" height="22" fill="#40b6e0"/><rect x="24" y="9" width="4" height="18" fill="#9ba3a9"/></svg>
<div style="position:absolute;left:123px;top:1070.07px;font:normal 26.5px/26.5px 'Liberation Sans', sans-serif;color:#bbbbbb;letter-spacing:0.2px;white-space:pre;">External Libraries</div>
<div style="position:absolute;left:858px;top:105px;width:1px;height:1279px;background:#2b2b2b;"></div>
<div style="position:absolute;left:859px;top:105px;width:1913px;height:49px;background:#3c3f41;"></div>
<div style="position:absolute;left:860px;top:106px;width:138px;height:48px;background:#4e5254;"></div>
<div style="position:absolute;left:860px;top:148px;width:138px;height:6px;background:#4a9fc4;"></div>
<svg style="position:absolute;left:878px;top:120px" width="30" height="22" viewBox="0 0 30 22"><path d="M2.1 20.5 L6.7 0.2 M5.6 6.5 C7.4 3.2 9.6 2.2 12.2 2.2 C15.2 2.2 16.4 3.9 15.8 6.8 L12.9 20.5 M15.3 6.5 C17.1 3.2 19.3 2.2 21.9 2.2 C24.9 2.2 26.6 3.9 26 6.8 L23.4 20.5" stroke="#3d8cab" stroke-width="4.3" fill="none"/></svg>
<div style="position:absolute;left:914px;top:119.03px;font:normal 23px/23px 'Liberation Sans', sans-serif;color:#bbbbbb;letter-spacing:0.3px;white-space:pre;">tera</div>
<svg style="position:absolute;left:968px;top:123px" width="15" height="15" viewBox="0 0 15 15"><path d="M1 1l13 13M14 1L1 14" stroke="#6f7477" stroke-width="1.8"/></svg>
<div style="position:absolute;left:859px;top:154px;width:1913px;height:46px;background:#313335;"></div>
<div style="position:absolute;left:972px;top:160px;width:114px;height:34px;background:#63666a;border-radius:3px"></div>
<div style="position:absolute;left:1098px;top:160px;width:86px;height:34px;background:#5f5e4a;border-radius:3px"></div>
<div class="cl" style="left:980.5px;top:162px;color:#bbbbbb">project</div>
<div class="cl" style="left:1106px;top:162px;color:#bbbbbb">build</div>
<div style="position:absolute;left:859px;top:200px;width:1913px;height:2px;background:#505254;"></div>
<div style="position:absolute;left:859px;top:202px;width:106px;height:1182px;background:#313335;"></div>
<div style="position:absolute;left:965px;top:202px;width:2px;height:1182px;background:#555555;"></div>
<div style="position:absolute;left:967px;top:202px;width:1805px;height:1182px;background:#2b2b2b;"></div>
<div style="position:absolute;left:967px;top:1054px;width:1805px;height:30px;background:#323232;"></div>
<div style="position:absolute;left:2657px;top:202px;width:2px;height:1182px;background:#4a4a4a;"></div>
<div style="position:absolute;left:1009px;top:244px;width:2px;height:840px;background:#393939;"></div>
<div style="position:absolute;left:1037px;top:304px;width:2px;height:750px;background:#393939;"></div>
<div style="position:absolute;left:1065px;top:334px;width:2px;height:690px;background:#393939;"></div>
<div style="position:absolute;left:1093px;top:424px;width:2px;height:210px;background:#393939;"></div>
<div style="position:absolute;left:1121px;top:454px;width:2px;height:150px;background:#393939;"></div>
<div style="position:absolute;left:1149px;top:544px;width:2px;height:30px;background:#393939;"></div>
<div style="position:absolute;left:1093px;top:694px;width:2px;height:300px;background:#393939;"></div>
<div style="position:absolute;left:1121px;top:724px;width:2px;height:30px;background:#393939;"></div>
<div style="position:absolute;left:1121px;top:814px;width:2px;height:150px;background:#393939;"></div>
<div style="position:absolute;left:1149px;top:844px;width:2px;height:90px;background:#393939;"></div>
<div style="position:absolute;left:1034px;top:274px;width:126px;height:30px;background:#3b514d;"></div>
<div style="position:absolute;left:1034px;top:1054px;width:140px;height:30px;background:#3b514d;"></div>
<div style="position:absolute;left:859px;top:202px;width:1913px;height:1182px;overflow:hidden">
<div class="cl" style="left:11px;top:-16px;color:#606366">25</div>
<div class="cl" style="left:11px;top:14px;color:#606366">26</div>
<div class="cl" style="left:119px;top:14px"><span class="v">  </span><span class="t">&lt;build&gt;</span><span class="v"></span></div>
<div class="cl" style="left:11px;top:44px;color:#606366">27</div>
<div class="cl" style="left:119px;top:44px"><span class="v">    </span><span class="t">&lt;finalName&gt;</span><span class="v">tera</span><span class="t">&lt;/finalName&gt;</span><span class="v"></span></div>
<div class="cl" style="left:11px;top:74px;color:#606366">28</div>
<div class="cl" style="left:119px;top:74px"><span class="v">    </span><span class="t"><span style="color:#ffef28">&lt;</span>plugins&gt;</span><span class="v"></span></div>
<div class="cl" style="left:11px;top:104px;color:#606366">29</div>
<div class="cl" style="left:119px;top:104px"><span class="v">      </span><span class="t">&lt;plugin&gt;</span><span class="v"></span></div>
<div class="cl" style="left:11px;top:134px;color:#606366">30</div>
<div class="cl" style="left:119px;top:134px"><span class="v">        </span><span class="t">&lt;artifactId&gt;</span><span class="v">maven-assembly-plugin</span><span class="t">&lt;/artifactId&gt;</span><span class="v"></span></div>
<div class="cl" style="left:11px;top:164px;color:#606366">31</div>
<div class="cl" style="left:119px;top:164px"><span class="v">        </span><span class="t">&lt;version&gt;</span><span class="v">3.0.0</span><span class="t">&lt;/version&gt;</span><span class="v"></span></div>
<div class="cl" style="left:11px;top:194px;color:#606366">32</div>
<div class="cl" style="left:119px;top:194px"><span class="v">        </span><span class="t">&lt;executions&gt;</span><span class="v"></span></div>
<div class="cl" style="left:11px;top:224px;color:#606366">33</div>
<div class="cl" style="left:119px;top:224px"><span class="v">          </span><span class="t">&lt;execution&gt;</span><span class="v"></span></div>
<div class="cl" style="left:11px;top:254px;color:#606366">34</div>
<div class="cl" style="left:119px;top:254px"><span class="v">            </span><span class="t">&lt;id&gt;</span><span class="v">make-assembly</span><span class="t">&lt;/id&gt;</span><span class="v"></span></div>
<div class="cl" style="left:11px;top:284px;color:#606366">35</div>
<div class="cl" style="left:119px;top:284px"><span class="v">            </span><span class="t">&lt;phase&gt;</span><span class="v">package</span><span class="t">&lt;/phase&gt;</span><span class="v"></span></div>
<div class="cl" style="left:11px;top:314px;color:#606366">36</div>
<div class="cl" style="left:119px;top:314px"><span class="v">            </span><span class="t">&lt;goals&gt;</span><span class="v"></span></div>
<div class="cl" style="left:11px;top:344px;color:#606366">37</div>
<div class="cl" style="left:119px;top:344px"><span class="v">              </span><span class="t">&lt;goal&gt;</span><span class="v">single</span><span class="t">&lt;/goal&gt;</span><span class="v"></span></div>
<div class="cl" style="left:11px;top:374px;color:#606366">38</div>
<div class="cl" style="left:119px;top:374px"><span class="v">            </span><span class="t">&lt;/goals&gt;</span><span class="v"></span></div>
<div class="cl" style="left:11px;top:404px;color:#606366">39</div>
<div class="cl" style="left:119px;top:404px"><span class="v">          </span><span class="t">&lt;/execution&gt;</span><span class="v"></span></div>
<div class="cl" style="left:11px;top:434px;color:#606366">40</div>
<div class="cl" style="left:119px;top:434px"><span class="v">        </span><span class="t">&lt;/executions&gt;</span><span class="v"></span></div>
<div class="cl" style="left:11px;top:464px;color:#606366">41</div>
<div class="cl" style="left:119px;top:464px"><span class="v">        </span><span class="t">&lt;configuration&gt;</span><span class="v"></span></div>
<div class="cl" style="left:11px;top:494px;color:#606366">42</div>
<div class="cl" style="left:119px;top:494px"><span class="v">          </span><span class="t">&lt;descriptorRefs&gt;</span><span class="v"></span></div>
<div class="cl" style="left:11px;top:524px;color:#606366">43</div>
<div class="cl" style="left:119px;top:524px"><span class="v">            </span><span class="t">&lt;descriptorRef&gt;</span><span class="v">jar-with-dependencies</span><span class="t">&lt;/descriptorRef&gt;</span><span class="v"></span></div>
<div class="cl" style="left:11px;top:554px;color:#606366">44</div>
<div class="cl" style="left:119px;top:554px"><span class="v">          </span><span class="t">&lt;/descriptorRefs&gt;</span><span class="v"></span></div>
<div class="cl" style="left:11px;top:584px;color:#606366">45</div>
<div class="cl" style="left:119px;top:584px"><span class="v">          </span><span class="t">&lt;archive&gt;</span><span class="v"></span></div>
<div class="cl" style="left:11px;top:614px;color:#606366">46</div>
<div class="cl" style="left:119px;top:614px"><span class="v">            </span><span class="t">&lt;manifest&gt;</span><span class="v"></span></div>
<div class="cl" style="left:11px;top:644px;color:#606366">47</div>
<div class="cl" style="left:11px;top:674px;color:#606366">48</div>
<div class="cl" style="left:119px;top:674px"><span class="v">              </span><span class="t">&lt;addClasspath&gt;</span><span class="v">true</span><span class="t">&lt;/addClasspath&gt;</span><span class="v"></span></div>
<div class="cl" style="left:11px;top:704px;color:#606366">49</div>
<div class="cl" style="left:119px;top:704px"><span class="v">              </span><span class="t">&lt;mainClass&gt;</span><span class="v">tera.App</span><span class="t">&lt;/mainClass&gt;</span><span class="v"></span></div>
<div class="cl" style="left:11px;top:734px;color:#606366">50</div>
<div class="cl" style="left:119px;top:734px"><span class="v">            </span><span class="t">&lt;/manifest&gt;</span><span class="v"></span></div>
<div class="cl" style="left:11px;top:764px;color:#606366">51</div>
<div class="cl" style="left:119px;top:764px"><span class="v">          </span><span class="t">&lt;/archive&gt;</span><span class="v"></span></div>
<div class="cl" style="left:11px;top:794px;color:#606366">52</div>
<div class="cl" style="left:119px;top:794px"><span class="v">        </span><span class="t">&lt;/configuration&gt;</span><span class="v"></span></div>
<div class="cl" style="left:11px;top:824px;color:#606366">53</div>
<div class="cl" style="left:119px;top:824px"><span class="v">      </span><span class="t">&lt;/plugin&gt;</span><span class="v"></span></div>
<div class="cl" style="left:11px;top:854px;color:#606366">54</div>
<div class="cl" style="left:119px;top:854px"><span class="v">    </span><span class="t">&lt;/plugins<span style="color:#ffef28">&gt;</span></span><span class="v"></span></div>
<div class="cl" style="left:11px;top:884px;color:#606366">55</div>
<div class="cl" style="left:119px;top:884px"><span class="v">  </span><span class="t">&lt;/build&gt;</span><span class="v"></span></div>
<div class="cl" style="left:11px;top:914px;color:#606366">56</div>
<div class="cl" style="left:11px;top:944px;color:#606366">57</div>
<div class="cl" style="left:11px;top:974px;color:#606366">58</div>
<div class="cl" style="left:119px;top:974px"><span class="v"></span><span class="t">&lt;/project&gt;</span><span class="v"></span></div>
<div class="cl" style="left:11px;top:1004px;color:#606366">59</div>
<div class="cl" style="left:315px;top:644px;color:#808080">&lt;!-- main</div>
<div class="cl" style="left:647px;top:644px;color:#808080">--&gt;</div>
</div>
<svg style="position:absolute;left:1300px;top:846px" width="24" height="24" viewBox="0 0 24 24"><path d="M9 2 Q6 8 1 12 M8 5 H20 Q18 17 6 23" stroke="#808080" stroke-width="2.2" fill="none"/></svg>
<svg style="position:absolute;left:1324px;top:846px" width="24" height="24" viewBox="0 0 24 24"><path d="M6 3 H19 M4 9 H21 Q20 18 8 23" stroke="#808080" stroke-width="2.2" fill="none"/></svg>
<svg style="position:absolute;left:1348px;top:846px" width="24" height="24" viewBox="0 0 24 24"><path d="M4 4 H19 Q15 15 3 22 M12 14 Q17 18 22 23" stroke="#808080" stroke-width="2.2" fill="none"/></svg>
<svg style="position:absolute;left:1372px;top:846px" width="24" height="24" viewBox="0 0 24 24"><path d="M4 6.5 H19 M11.5 2 Q10 10 3.5 17.5 M5.5 14.5 Q11 9.5 16 11.5 Q18.5 13 18 16 M15 12.5 Q9.5 15.5 10 19.5 Q11 23 21 22" stroke="#808080" stroke-width="2.2" fill="none"/></svg>
<svg style="position:absolute;left:1396px;top:846px" width="24" height="24" viewBox="0 0 24 24"><path d="M2 8 H9 M6 2 V23 Q4 23 3 22 M2 17 L9 13 M12 2 V9 Q13 11 22 10 M20 3 L13 6 M12 13 H21 V23 H12 Z M12 18 H21" stroke="#808080" stroke-width="2" fill="none"/></svg>
<svg style="position:absolute;left:1420px;top:846px" width="24" height="24" viewBox="0 0 24 24"><path d="M12 1 V4 M3 7 V4 H21 V7 M6 10 H18 M12 10 V20 M12 15 H18 M7 14 Q7 20 3 23 M6 19 Q10 23 22 22" stroke="#808080" stroke-width="2" fill="none"/></svg>
<svg style="position:absolute;left:1444px;top:846px" width="24" height="24" viewBox="0 0 24 24"><path d="M2 7 H22 M14 2 V16 Q14 20 10 20 Q7 19 8 15 Q11 12 14 15 Q14 20 8 24" stroke="#808080" stroke-width="2.2" fill="none"/></svg>
<svg style="position:absolute;left:1468px;top:846px" width="24" height="24" viewBox="0 0 24 24"><path d="M5 4 H18 L7 15 Q14 10 19 15 Q20 22 12 22 Q8 21 10 18 Q13 18 14 22" stroke="#808080" stroke-width="2.2" fill="none"/></svg>
<svg style="position:absolute;left:957px;top:221px" width="19" height="22" viewBox="0 0 19 22"><path d="M1.5 1.5h16v11.5l-8 7.5-8-7.5z" fill="#2b2b2b" stroke="#5a5a5a" stroke-width="2"/><path d="M5.5 8h8" stroke="#5a5a5a" stroke-width="2"/></svg>
<svg style="position:absolute;left:957px;top:281px" width="19" height="22" viewBox="0 0 19 22"><path d="M1.5 1.5h16v11.5l-8 7.5-8-7.5z" fill="#2b2b2b" stroke="#5a5a5a" stroke-width="2"/><path d="M5.5 8h8" stroke="#5a5a5a" stroke-width="2"/></svg>
<svg style="position:absolute;left:957px;top:311px" width="19" height="22" viewBox="0 0 19 22"><path d="M1.5 1.5h16v11.5l-8 7.5-8-7.5z" fill="#2b2b2b" stroke="#5a5a5a" stroke-width="2"/><path d="M5.5 8h8" stroke="#5a5a5a" stroke-width="2"/></svg>
<svg style="position:absolute;left:957px;top:401px" width="19" height="22" viewBox="0 0 19 22"><path d="M1.5 1.5h16v11.5l-8 7.5-8-7.5z" fill="#2b2b2b" stroke="#5a5a5a" stroke-width="2"/><path d="M5.5 8h8" stroke="#5a5a5a" stroke-width="2"/></svg>
<svg style="position:absolute;left:957px;top:431px" width="19" height="22" viewBox="0 0 19 22"><path d="M1.5 1.5h16v11.5l-8 7.5-8-7.5z" fill="#2b2b2b" stroke="#5a5a5a" stroke-width="2"/><path d="M5.5 8h8" stroke="#5a5a5a" stroke-width="2"/></svg>
<svg style="position:absolute;left:957px;top:521px" width="19" height="22" viewBox="0 0 19 22"><path d="M1.5 1.5h16v11.5l-8 7.5-8-7.5z" fill="#2b2b2b" stroke="#5a5a5a" stroke-width="2"/><path d="M5.5 8h8" stroke="#5a5a5a" stroke-width="2"/></svg>
<svg style="position:absolute;left:957px;top:671px" width="19" height="22" viewBox="0 0 19 22"><path d="M1.5 1.5h16v11.5l-8 7.5-8-7.5z" fill="#2b2b2b" stroke="#5a5a5a" stroke-width="2"/><path d="M5.5 8h8" stroke="#5a5a5a" stroke-width="2"/></svg>
<svg style="position:absolute;left:957px;top:701px" width="19" height="22" viewBox="0 0 19 22"><path d="M1.5 1.5h16v11.5l-8 7.5-8-7.5z" fill="#2b2b2b" stroke="#5a5a5a" stroke-width="2"/><path d="M5.5 8h8" stroke="#5a5a5a" stroke-width="2"/></svg>
<svg style="position:absolute;left:957px;top:791px" width="19" height="22" viewBox="0 0 19 22"><path d="M1.5 1.5h16v11.5l-8 7.5-8-7.5z" fill="#2b2b2b" stroke="#5a5a5a" stroke-width="2"/><path d="M5.5 8h8" stroke="#5a5a5a" stroke-width="2"/></svg>
<svg style="position:absolute;left:957px;top:821px" width="19" height="22" viewBox="0 0 19 22"><path d="M1.5 1.5h16v11.5l-8 7.5-8-7.5z" fill="#2b2b2b" stroke="#5a5a5a" stroke-width="2"/><path d="M5.5 8h8" stroke="#5a5a5a" stroke-width="2"/></svg>
<svg style="position:absolute;left:957px;top:578px" width="19" height="22" viewBox="0 0 19 22"><path d="M1.5 20.5h16V9L9.5 1.5 1.5 9z" fill="#2b2b2b" stroke="#5a5a5a" stroke-width="2"/><path d="M5.5 14h8" stroke="#5a5a5a" stroke-width="2"/></svg>
<svg style="position:absolute;left:957px;top:608px" width="19" height="22" viewBox="0 0 19 22"><path d="M1.5 20.5h16V9L9.5 1.5 1.5 9z" fill="#2b2b2b" stroke="#5a5a5a" stroke-width="2"/><path d="M5.5 14h8" stroke="#5a5a5a" stroke-width="2"/></svg>
<svg style="position:absolute;left:957px;top:638px" width="19" height="22" viewBox="0 0 19 22"><path d="M1.5 20.5h16V9L9.5 1.5 1.5 9z" fill="#2b2b2b" stroke="#5a5a5a" stroke-width="2"/><path d="M5.5 14h8" stroke="#5a5a5a" stroke-width="2"/></svg>
<svg style="position:absolute;left:957px;top:758px" width="19" height="22" viewBox="0 0 19 22"><path d="M1.5 20.5h16V9L9.5 1.5 1.5 9z" fill="#2b2b2b" stroke="#5a5a5a" stroke-width="2"/><path d="M5.5 14h8" stroke="#5a5a5a" stroke-width="2"/></svg>
<svg style="position:absolute;left:957px;top:938px" width="19" height="22" viewBox="0 0 19 22"><path d="M1.5 20.5h16V9L9.5 1.5 1.5 9z" fill="#2b2b2b" stroke="#5a5a5a" stroke-width="2"/><path d="M5.5 14h8" stroke="#5a5a5a" stroke-width="2"/></svg>
<svg style="position:absolute;left:957px;top:968px" width="19" height="22" viewBox="0 0 19 22"><path d="M1.5 20.5h16V9L9.5 1.5 1.5 9z" fill="#2b2b2b" stroke="#5a5a5a" stroke-width="2"/><path d="M5.5 14h8" stroke="#5a5a5a" stroke-width="2"/></svg>
<svg style="position:absolute;left:957px;top:998px" width="19" height="22" viewBox="0 0 19 22"><path d="M1.5 20.5h16V9L9.5 1.5 1.5 9z" fill="#2b2b2b" stroke="#5a5a5a" stroke-width="2"/><path d="M5.5 14h8" stroke="#5a5a5a" stroke-width="2"/></svg>
<svg style="position:absolute;left:957px;top:1028px" width="19" height="22" viewBox="0 0 19 22"><path d="M1.5 20.5h16V9L9.5 1.5 1.5 9z" fill="#2b2b2b" stroke="#5a5a5a" stroke-width="2"/><path d="M5.5 14h8" stroke="#5a5a5a" stroke-width="2"/></svg>
<svg style="position:absolute;left:957px;top:1058px" width="19" height="22" viewBox="0 0 19 22"><path d="M1.5 20.5h16V9L9.5 1.5 1.5 9z" fill="#2b2b2b" stroke="#5a5a5a" stroke-width="2"/><path d="M5.5 14h8" stroke="#5a5a5a" stroke-width="2"/></svg>
<svg style="position:absolute;left:957px;top:1088px" width="19" height="22" viewBox="0 0 19 22"><path d="M1.5 20.5h16V9L9.5 1.5 1.5 9z" fill="#2b2b2b" stroke="#5a5a5a" stroke-width="2"/><path d="M5.5 14h8" stroke="#5a5a5a" stroke-width="2"/></svg>
<svg style="position:absolute;left:957px;top:1178px" width="19" height="22" viewBox="0 0 19 22"><path d="M1.5 20.5h16V9L9.5 1.5 1.5 9z" fill="#2b2b2b" stroke="#5a5a5a" stroke-width="2"/><path d="M5.5 14h8" stroke="#5a5a5a" stroke-width="2"/></svg>
<svg style="position:absolute;left:995px;top:1022px" width="22" height="32" viewBox="0 0 22 32"><defs><radialGradient id="blb" cx="0.4" cy="0.35" r="0.7"><stop offset="0" stop-color="#ffd27a"/><stop offset="1" stop-color="#e9a13a"/></radialGradient></defs><path d="M11 0.5a10 10 0 0 1 6.5 17.5c-1.5 1.5-2 2.5-2 4H6.5c0-1.5-.5-2.5-2-4A10 10 0 0 1 11 0.5z" fill="url(#blb)"/><path d="M7 7l4 4 4-4M11 11v10" stroke="#fff0c8" stroke-width="1.2" fill="none"/><rect x="6" y="22" width="10" height="2.2" fill="#c9c9c9"/><rect x="6" y="25" width="10" height="2.2" fill="#c9c9c9"/><path d="M6.5 28h9v1.5a2 2 0 0 1-2 2h-5a2 2 0 0 1-2-2z" fill="#8f8f8f"/></svg>
<div style="position:absolute;left:41px;top:1384px;width:2731px;height:1px;background:#46494b;"></div>
<div style="position:absolute;left:41px;top:1385px;width:2731px;height:45px;background:#3c3f41;"></div>
<div style="position:absolute;left:52px;top:1396.65px;font:normal 22.5px/22.5px 'Liberation Sans', sans-serif;color:#8c8c8c;letter-spacing:0px;white-space:pre;">Run</div>
<svg style="position:absolute;left:100px;top:1392px" width="23" height="30" viewBox="0 0 23 30"><rect x="0" y="0" width="6" height="30" fill="#8c7757"/><rect x="16" y="0" width="6" height="30" fill="#8c7757"/><path d="M8 1l5 2-5 2 5 2-5 2 5 2-5 2 5 2-5 2 5 2-5 2 5 2-5 2 5 2-5 2" stroke="#777" stroke-width="1.2" fill="none"/></svg>
<div style="position:absolute;left:136px;top:1396.23px;font:normal 23px/23px 'Liberation Sans', sans-serif;color:#8c8c8c;letter-spacing:0.2px;white-space:pre;">tera.jar</div>
<div style="position:absolute;left:41px;top:1430px;width:2731px;height:2px;background:#2a2b2c;"></div>
<div style="position:absolute;left:41px;top:1432px;width:59px;height:120px;background:#3c3f41;"></div>
<div style="position:absolute;left:100px;top:1432px;width:2px;height:120px;background:#2b2b2b;"></div>
<div style="position:absolute;left:102px;top:1432px;width:58px;height:120px;background:#3c3f41;"></div>
<div style="position:absolute;left:160px;top:1432px;width:2612px;height:120px;background:#2b2b2b;"></div>
<svg style="position:absolute;left:60px;top:1445px" width="22" height="27" viewBox="0 0 22 27"><path d="M0 0l22 13.5L0 27z" fill="#3fb547"/></svg>
<div style="position:absolute;left:58px;top:1496px;width:24px;height:24px;background:#5e5e5e;"></div>
<div style="position:absolute;left:59px;top:1545px;width:7px;height:7px;background:#5e5e5e;"></div>
<div style="position:absolute;left:72px;top:1545px;width:7px;height:7px;background:#5e5e5e;"></div>
<svg style="position:absolute;left:118px;top:1445px" width="24" height="25" viewBox="0 0 24 25"><path d="M12 0l12 12h-7v13h-10V12H0z" fill="#5e5e5e"/></svg>
<svg style="position:absolute;left:118px;top:1495px" width="24" height="25" viewBox="0 0 24 25"><path d="M12 25l12-12h-7V0h-10v13H0z" fill="#5e5e5e"/></svg>
<svg style="position:absolute;left:116px;top:1540px" width="28" height="12" viewBox="0 0 28 12"><path d="M0 4h20" stroke="#bbbbbb" stroke-width="2"/><path d="M26 6v6M20 12l6-6" stroke="#4a9bd0" stroke-width="2.5"/></svg>
<div class="cl" style="left:182px;top:1432.1px;color:#bbbbbb">/Library/Java/JavaVirtualMachines/jdk1.8.0_131.jdk/Contents/Home/bin/java -Dfile.encoding=UTF-8 -jar /Users/miyoshi/tera/out/artifacts/tera_jar/tera.jar</div>
<div class="cl" style="left:182px;top:1462.1px;color:#ff6b68">Error: Invalid or corrupt jarfile /Users/miyoshi/tera/out/artifacts/tera_jar/tera.jar</div>
<div class="cl" style="left:182px;top:1522.1px;color:#bbbbbb">Process finished with exit code 1</div>
</body></html>
